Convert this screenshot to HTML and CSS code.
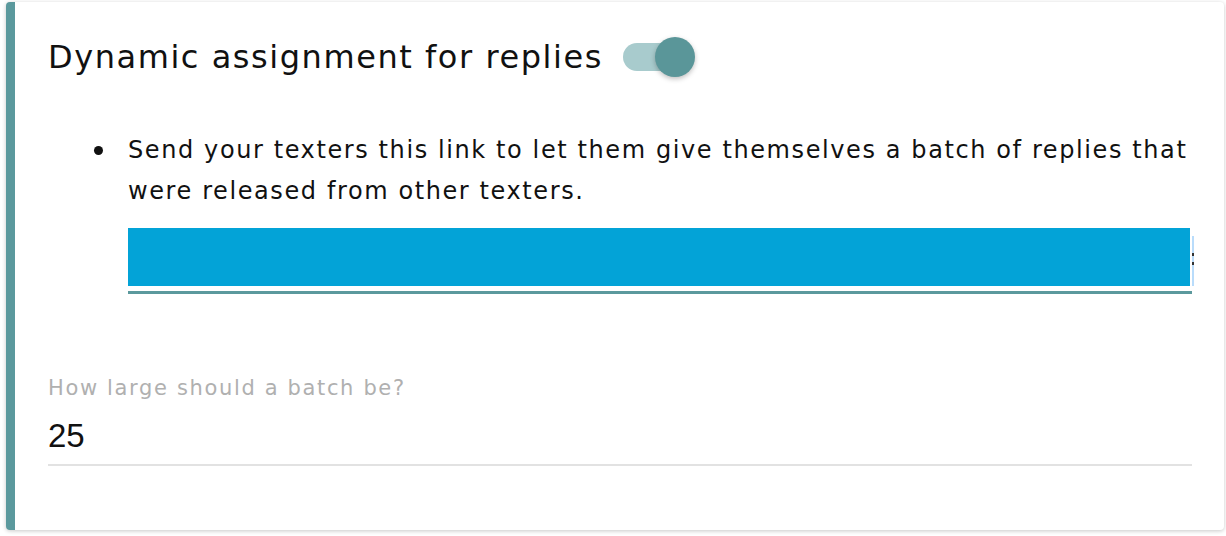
FILE: index.html
```html
<!DOCTYPE html>
<html>
<head>
<meta charset="utf-8">
<link rel="stylesheet" href="styles.css">
</head>
<body>
<div class="card">
  <div class="title-row">
    <h2 class="title">Dynamic assignment for replies</h2>
    <div class="toggle"><span class="track"></span><span class="thumb"></span></div>
  </div>
  <ul class="info">
    <li>Send your texters this link to let them give themselves a batch of replies that were released from other texters.
      <div class="link-field"><div class="link-sel"></div><span class="sel-tail"></span></div>
    </li>
  </ul>
  <div class="field">
    <label class="field-label">How large should a batch be?</label>
    <div class="field-value">25</div>
  </div>
</div>
</body>
</html>
```

FILE: styles.css
```css
html, body {
  margin: 0;
  background: #ffffff;
}
body {
  padding: 2px 2px 6px 6px;
  font-family: "DejaVu Sans", "Noto Sans", sans-serif;
  color: #111;
}
.card {
  height: 528px;
  box-sizing: border-box;
  border-left: 9px solid #5b999d;
  border-radius: 4px;
  background: #fff;
  box-shadow: 0 1px 4px rgba(0,0,0,0.22);
  padding: 0 32px 0 33px;
  overflow: hidden;
}
.title-row {
  display: flex;
  align-items: center;
  gap: 20px;
  padding-top: 34px;
  height: 42px;
}
.title {
  margin: 0;
  font-weight: 400;
  font-size: 32px;
  letter-spacing: 1.55px;
  line-height: 42px;
  color: #111;
  white-space: nowrap;
}
.toggle {
  position: relative;
  width: 72px;
  height: 42px;
  flex: none;
}
.track {
  position: absolute;
  left: 0;
  top: 7px;
  width: 66px;
  height: 28px;
  border-radius: 14px;
  background: #a8cbcd;
}
.thumb {
  position: absolute;
  left: 32px;
  top: 1px;
  width: 40px;
  height: 40px;
  border-radius: 50%;
  background: #5a9699;
  box-shadow: 0 2px 5px rgba(0,0,0,0.25);
}
.info {
  margin: 0;
  padding: 52px 0 0 80px;
  list-style: none;
}
.info li {
  position: relative;
  font-size: 24px;
  letter-spacing: 1.6px;
  line-height: 41px;
  color: #111;
}
.info li::before {
  content: "";
  position: absolute;
  left: -34px;
  top: 16px;
  width: 9px;
  height: 9px;
  border-radius: 50%;
  background: #111;
}
.link-field {
  position: relative;
  margin-top: 16px;
  height: 66px;
  border-bottom: 3px solid #5b999d;
  box-sizing: border-box;
  display: flex;
  align-items: flex-start;
}
.link-sel {
  width: 1062px;
  height: 58px;
  background: #03a3d7;
}
.sel-tail {
  position: absolute;
  right: -2px;
  top: 8px;
  width: 2px;
  height: 50px;
  background: #b9dcfb;
}
.sel-tail::before,
.sel-tail::after {
  content: "";
  position: absolute;
  left: 0;
  width: 2px;
  height: 3px;
  background: #333;
}
.sel-tail::before { top: 17px; }
.sel-tail::after { top: 26px; }
.field {
  padding-top: 81px;
}
.field-label {
  display: block;
  font-size: 21px;
  letter-spacing: 1.65px;
  line-height: 26px;
  color: #b0b0b0;
}
.field-value {
  margin-top: 15px;
  font-family: "Liberation Sans", Arial, sans-serif;
  font-size: 33px;
  line-height: 40px;
  padding-bottom: 8px;
  border-bottom: 2px solid #e2e2e2;
}
```
